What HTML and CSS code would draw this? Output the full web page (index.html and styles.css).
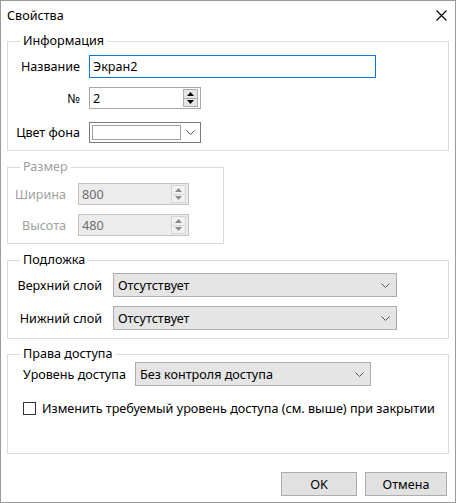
FILE: index.html
```html
<!DOCTYPE html>
<html lang="ru">
<head>
    <meta charset="UTF-8">
    <title>Свойства</title>
    <link rel="stylesheet" href="styles.css">
</head>
<body>

<div class="window">
    <div class="titlebar">
        <span>Свойства</span>
        <svg class="close" width="11" height="11" viewBox="0 0 11 11"><path d="M0.5 0.5 L10.5 10.5 M10.5 0.5 L0.5 10.5" stroke="#000" stroke-width="1.1"/></svg>
    </div>

    <div class="content">
        <!-- Информация -->
        <fieldset class="group info">
            <legend>Информация</legend>
            <div class="row r-name">
                <label class="lbl">Название</label>
                <div class="field text focused">Экран2</div>
            </div>
            <div class="row r-num">
                <label class="lbl">№</label>
                <div class="field spin">
                    <span class="val">2</span>
                    <div class="spin-btns">
                        <div class="sb"><svg width="7" height="4" viewBox="0 0 7 4"><path d="M3.5 0 L7 4 L0 4 Z" fill="#000"/></svg></div>
                        <div class="sb"><svg width="7" height="4" viewBox="0 0 7 4"><path d="M0 0 L7 0 L3.5 4 Z" fill="#000"/></svg></div>
                    </div>
                </div>
            </div>
            <div class="row r-color">
                <label class="lbl">Цвет фона</label>
                <div class="field colorpick">
                    <span class="swatch"></span>
                    <svg class="chev" width="9" height="5" viewBox="0 0 9 5"><path d="M0.5 0.5 L4.5 4.5 L8.5 0.5" fill="none" stroke="#555" stroke-width="1"/></svg>
                </div>
            </div>
        </fieldset>

        <!-- Размер -->
        <fieldset class="group size disabled">
            <legend>Размер</legend>
            <div class="row r-w">
                <label class="lbl">Ширина</label>
                <div class="field spin">
                    <span class="val">800</span>
                    <div class="spin-btns">
                        <div class="sb"><svg width="7" height="4" viewBox="0 0 7 4"><path d="M3.5 0 L7 4 L0 4 Z" fill="#8a8a8a"/></svg></div>
                        <div class="sb"><svg width="7" height="4" viewBox="0 0 7 4"><path d="M0 0 L7 0 L3.5 4 Z" fill="#8a8a8a"/></svg></div>
                    </div>
                </div>
            </div>
            <div class="row r-h">
                <label class="lbl">Высота</label>
                <div class="field spin">
                    <span class="val">480</span>
                    <div class="spin-btns">
                        <div class="sb"><svg width="7" height="4" viewBox="0 0 7 4"><path d="M3.5 0 L7 4 L0 4 Z" fill="#8a8a8a"/></svg></div>
                        <div class="sb"><svg width="7" height="4" viewBox="0 0 7 4"><path d="M0 0 L7 0 L3.5 4 Z" fill="#8a8a8a"/></svg></div>
                    </div>
                </div>
            </div>
        </fieldset>

        <!-- Подложка -->
        <fieldset class="group layers">
            <legend>Подложка</legend>
            <div class="row r-top">
                <label class="lbl">Верхний слой</label>
                <div class="field combo">
                    <span>Отсутствует</span>
                    <svg class="chev" width="9" height="5" viewBox="0 0 9 5"><path d="M0.5 0.5 L4.5 4.5 L8.5 0.5" fill="none" stroke="#555" stroke-width="1"/></svg>
                </div>
            </div>
            <div class="row r-bottom">
                <label class="lbl">Нижний слой</label>
                <div class="field combo">
                    <span>Отсутствует</span>
                    <svg class="chev" width="9" height="5" viewBox="0 0 9 5"><path d="M0.5 0.5 L4.5 4.5 L8.5 0.5" fill="none" stroke="#555" stroke-width="1"/></svg>
                </div>
            </div>
        </fieldset>

        <!-- Права доступа -->
        <fieldset class="group access">
            <legend>Права доступа</legend>
            <div class="row r-level">
                <label class="lbl">Уровень доступа</label>
                <div class="field combo">
                    <span>Без контроля доступа</span>
                    <svg class="chev" width="9" height="5" viewBox="0 0 9 5"><path d="M0.5 0.5 L4.5 4.5 L8.5 0.5" fill="none" stroke="#555" stroke-width="1"/></svg>
                </div>
            </div>
            <div class="row r-check">
                <span class="checkbox"></span>
                <span>Изменить требуемый уровень доступа (см. выше) при закрытии</span>
            </div>
        </fieldset>

        <div class="buttons">
            <div class="btn btn-ok">OK</div>
            <div class="btn btn-cancel">Отмена</div>
        </div>
    </div>
</div>

</body>
</html>
```

FILE: styles.css
```css
* {
    box-sizing: border-box;
}

body, html {
    margin: 0;
    padding: 0;
    background-color: #fff;
}

body {
    font-family: "Noto Sans", "Open Sans", sans-serif;
    font-size: 12.6px;
    color: #000;
}

.window {
    width: 456px;
    height: 503px;
    border: 1px solid #9b9b9b;
    background-color: #fff;
}

.titlebar {
    height: 29px;
    display: flex;
    align-items: center;
    justify-content: space-between;
    padding: 0 8px 0 6px;
}

.content {
    padding: 0 6px;
}

/* group boxes */
.group {
    border: 1px solid #dcdcdc;
    margin: 0;
    padding: 0;
    min-width: 0;
}

.group legend {
    margin-left: 12px;
    padding: 0 3px;
    line-height: 16px;
}

.info {
    margin-top: 3px;
    padding-bottom: 7px;
}

.size {
    width: 217px;
    margin-top: 8px;
    padding-bottom: 7px;
}

.layers {
    margin-top: 8px;
    padding-bottom: 8px;
}

.access {
    margin-top: 7px;
    padding-bottom: 38px;
}

.disabled legend,
.disabled .lbl {
    color: #a0a0a0;
}

/* rows */
.row {
    display: flex;
    align-items: center;
}

.lbl {
    flex: none;
    text-align: right;
}

.field {
    flex: none;
    display: flex;
    align-items: center;
    border: 1px solid #7a7a7a;
    background-color: #fff;
}

.info .lbl {
    width: 72px;
    margin-right: 9px;
}

.r-name {
    margin-top: 6px;
}

.r-num {
    margin-top: 9px;
}

.r-color {
    margin-top: 13px;
}

.text {
    width: 287px;
    height: 23px;
    padding-left: 3px;
}

.focused {
    border-color: #0078d7;
}

.spin {
    height: 22px;
    padding: 1px;
    padding-left: 3px;
    justify-content: space-between;
    border-color: #a9a9a9;
}

.info .spin {
    width: 112px;
}

.spin-btns {
    display: flex;
    flex-direction: column;
    height: 18px;
    width: 15px;
    margin-right: 1px;
}

.sb {
    flex: 1;
    display: flex;
    align-items: center;
    justify-content: center;
    background-color: #e6e6e6;
    border: 1px solid #adadad;
}

.sb + .sb {
    border-top: none;
}

.colorpick {
    width: 112px;
    height: 21px;
    padding: 0 5px 0 2px;
    justify-content: space-between;
}

.swatch {
    width: 89px;
    height: 15px;
    border: 1px solid #a0a0a0;
    background-color: #fff;
}

/* size group */
.size .lbl {
    width: 58px;
    margin-right: 12px;
}

.r-w {
    margin-top: 8px;
}

.r-h {
    margin-top: 9px;
}

.size .spin {
    width: 111px;
    background-color: #ececec;
    border-color: #c2c2c2;
    color: #6d6d6d;
}

.size .sb {
    background-color: #f2f2f2;
    border-color: #d6d6d6;
}

/* combos */
.combo {
    height: 24px;
    padding: 0 6px 0 4px;
    justify-content: space-between;
    background-color: #e5e5e5;
    border-color: #adadad;
}

.layers .lbl {
    width: 94px;
    margin-right: 11px;
}

.r-top {
    margin-top: 5px;
}

.r-bottom {
    margin-top: 9px;
}

.layers .combo {
    width: 284px;
}

.access .lbl {
    width: 112px;
    padding-left: 15px;
    text-align: left;
    box-sizing: content-box;
}

.access .combo {
    width: 236px;
}

.r-check {
    height: 13px;
    margin-top: 16px;
    padding-left: 15px;
}

.checkbox {
    width: 13px;
    height: 13px;
    border: 1px solid #333;
    background-color: #fff;
    margin-right: 6px;
}

/* buttons */
.buttons {
    display: flex;
    justify-content: flex-end;
    gap: 8px;
    margin-top: 18px;
    padding-right: 2px;
}

.btn {
    height: 24px;
    display: flex;
    align-items: center;
    justify-content: center;
    background-color: #e1e1e1;
    border: 1px solid #adadad;
}

.btn-ok {
    width: 76px;
}

.btn-cancel {
    width: 82px;
}
```
